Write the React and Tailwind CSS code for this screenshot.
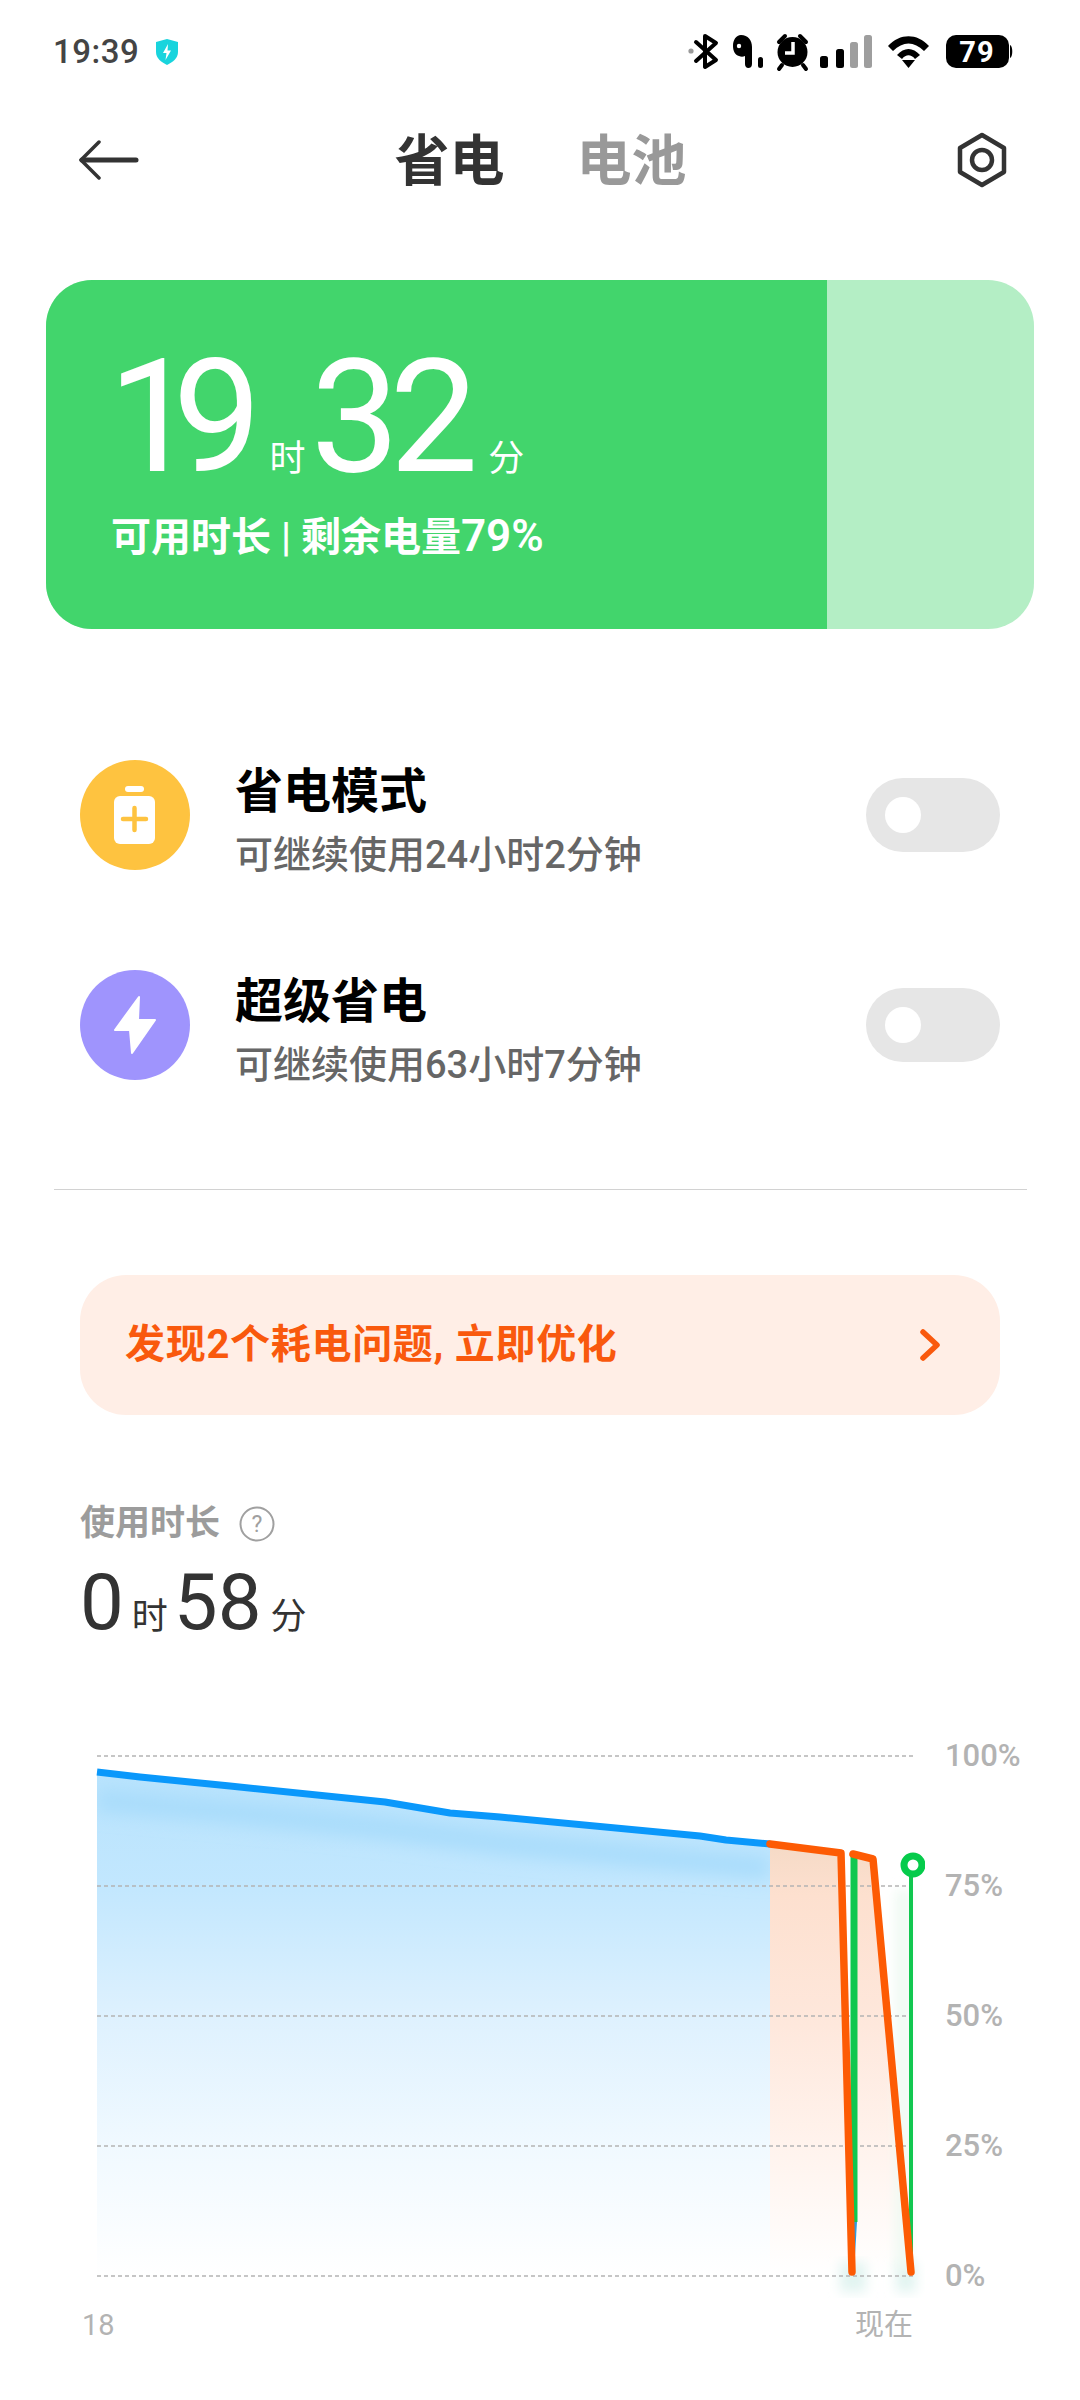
import React from 'react';

const cn = { fontFamily: 'Roboto, "Noto Sans CJK SC", sans-serif' };

/* ================= Status bar icons ================= */
const StatusIcons = () => (
  <svg width="335" height="40" viewBox="685 32 335 40" className="block">
    {/* bluetooth */}
    <circle cx="691" cy="51" r="2.6" fill="#9a9a9a" />
    <path d="M696 42 L716 60 L705 67 V36 L716 43 L696 61" fill="none" stroke="#000" strokeWidth="4" strokeLinejoin="round" strokeLinecap="round" />
    {/* earbud */}
    <path d="M741 35 C748 35 752 40 752 47 V64 C752 67 750 68 748.500 68 C746 68 745 66 745 64 V56 C743 57 741 57 739 56 C735 55 733 51 733 46 C733 40 736 35 741 35 Z" fill="#000" />
    <circle cx="739" cy="46" r="2.200" fill="#fff" />
    <rect x="758" y="57" width="5" height="11" rx="2.500" fill="#000" />
    {/* alarm */}
    <circle cx="792.500" cy="52" r="15" fill="#000" />
    <path d="M779 42 L785 36 M806 42 L800 36 M782 65 L779 69 M803 65 L806 69" stroke="#000" strokeWidth="4" strokeLinecap="round" />
    <path d="M793 42 V53 H785" fill="none" stroke="#fff" strokeWidth="3.500" />
    {/* signal */}
    <rect x="820" y="56" width="8" height="12" rx="2.500" fill="#000" />
    <rect x="836" y="49" width="8" height="19" rx="2.500" fill="#000" />
    <rect x="850" y="42" width="8" height="26" rx="2.500" fill="#9e9e9e" />
    <rect x="864" y="35" width="8" height="33" rx="2.500" fill="#9e9e9e" />
    {/* wifi */}
    <path d="M888 46 C900 33 917 33 929 46 L924 51 C914 41 903 41 893 51 Z" fill="#000" />
    <path d="M897 55 C904 47 913 47 920 55 L915 59 C911 54 906 54 902 59 Z" fill="#000" />
    <path d="M902 60 H915 L908.500 68 Z" fill="#000" />
    {/* battery */}
    <rect x="946" y="35" width="63" height="33" rx="10" fill="#000" />
    <path d="M1010 45 C1013 46 1013 57 1010 58 Z" fill="#000" />
    <text x="977" y="62" textAnchor="middle" fontSize="29" fontWeight="700" fill="#fff" fontFamily="Roboto, sans-serif" letterSpacing="1">79</text>
  </svg>
);

const BackArrow = () => (
  <svg width="60" height="40" viewBox="0 0 60 40" fill="none" stroke="#333" strokeLinecap="round" strokeLinejoin="round">
    <path d="M20 2 L2 20 L20 38" strokeWidth="3.500" />
    <path d="M3 20 H57" strokeWidth="5" />
  </svg>
);

const SettingsHex = () => (
  <svg width="52" height="56" viewBox="0 0 52 56" fill="none" stroke="#333" strokeWidth="4.500" strokeLinejoin="round">
    <path d="M26 3 L48 16 V40 L26 53 L4 40 V16 Z" />
    <circle cx="26" cy="28" r="10" />
  </svg>
);

const BatteryPlus = () => (
  <svg width="44" height="58" viewBox="0 0 44 58">
    <rect x="12" y="0" width="19" height="6" rx="3" fill="#fff" />
    <rect x="1" y="10" width="41" height="48" rx="6" fill="#fff" />
    <path d="M21.500 22 V44 M10 33 H33" stroke="#fec340" strokeWidth="4.500" strokeLinecap="round" />
  </svg>
);

const Bolt = () => (
  <svg width="46" height="60" viewBox="0 0 46 60">
    <path d="M27 2 L3 35 H18 L20 58 L43 25 H26 Z" fill="#fff" stroke="#fff" strokeWidth="2" strokeLinejoin="round" />
  </svg>
);

/* ================= Chart ================= */
const Chart = () => (
  <svg width="845" height="560" viewBox="80 1740 845 560" className="block shrink-0">
    <defs>
      <linearGradient id="blueFill" gradientUnits="userSpaceOnUse" x1="0" y1="1772" x2="0" y2="2276">
        <stop offset="0" stopColor="#b8e3fd" />
        <stop offset="0.226" stopColor="#c2e7fe" />
        <stop offset="0.484" stopColor="#def1fe" />
        <stop offset="0.74" stopColor="#f0f9ff" />
        <stop offset="1" stopColor="#ffffff" />
      </linearGradient>
      <linearGradient id="orangeFill" gradientUnits="userSpaceOnUse" x1="0" y1="1844" x2="0" y2="2276">
        <stop offset="0" stopColor="#f5dac6" />
        <stop offset="0.12" stopColor="#fde0cf" />
        <stop offset="0.4" stopColor="#fee7db" />
        <stop offset="0.7" stopColor="#fff3ed" />
        <stop offset="1" stopColor="#ffffff" />
      </linearGradient>
      <clipPath id="blueClip">
        <path d="M97 1772 L140 1777 L230 1786 L385 1802 L450 1813 L500 1817 L700 1836 L726 1840 L770 1844 V2276 H97 Z" />
      </clipPath>
      <filter id="soft" x="-50%" y="-50%" width="200%" height="200%">
        <feGaussianBlur stdDeviation="9" />
      </filter>
      <filter id="softer" x="-100%" y="-20%" width="300%" height="140%">
        <feGaussianBlur stdDeviation="6" />
      </filter>
    </defs>

    {/* areas */}
    <path d="M97 1772 L140 1777 L230 1786 L385 1802 L450 1813 L500 1817 L700 1836 L726 1840 L770 1844 V2276 H97 Z" fill="url(#blueFill)" />
    <g clipPath="url(#blueClip)">
      <path d="M97 1800 L230 1812 L385 1828 L500 1843 L770 1868" fill="none" stroke="#a8dcfb" strokeWidth="22" filter="url(#soft)" />
    </g>
    <path d="M770 1844 L840 1854 L850 2272 L850 2276 H770 Z" fill="url(#orangeFill)" />
    <path d="M853 1854 L872 1860 L911 2272 V2276 H853 Z" fill="url(#orangeFill)" />

    {/* glows */}
    <rect x="840" y="2262" width="26" height="30" fill="#e2f4f1" filter="url(#softer)" />
    <rect x="896" y="2262" width="20" height="30" fill="#e2f4f1" filter="url(#softer)" />
    <rect x="896" y="1890" width="14" height="380" fill="#eef9f2" filter="url(#softer)" />

    {/* grid */}
    {[1756, 1886, 2016, 2146, 2276].map((y) => (
      <line key={y} x1="97" x2="913" y1={y} y2={y} stroke="#b4b4b4" strokeWidth="1.500" strokeDasharray="4 3" />
    ))}

    {/* lines */}
    <polyline points="97,1772 140,1777 230,1786 385,1802 450,1813 500,1817 700,1836 726,1840 770,1844" fill="none" stroke="#0a98fb" strokeWidth="7" strokeLinejoin="round" />
    <path d="M854 1856 V2222" stroke="#10c74f" strokeWidth="7" fill="none" />
    <path d="M851 2222 H857 L854 2272 Z" fill="#2f9be0" />
    <path d="M911 1872 V2272" stroke="#10c74f" strokeWidth="4" fill="none" />
    <circle cx="913" cy="1865" r="9" fill="#fff" stroke="#06cb4b" strokeWidth="7" />
    <path d="M770 1844 L841 1853 L852 2272" fill="none" stroke="#fd5b04" strokeWidth="7.500" strokeLinejoin="round" strokeLinecap="round" />
    <path d="M853 1854 L873 1859 L911 2272" fill="none" stroke="#fd5b04" strokeWidth="7.500" strokeLinejoin="round" strokeLinecap="round" />
  </svg>
);

const PowerRow = ({ icon, color, title, sub }) => (
  <div className="flex items-center h-[110px]">
    <div className={`w-[110px] h-[110px] rounded-full flex items-center justify-center shrink-0 ${color}`}>
      {icon}
    </div>
    <div className="ml-[45px] flex-1 pt-[10px]">
      <p className="text-[48px] leading-[56px] font-bold text-black">{title}</p>
      <p className="text-[38px] leading-[44px] font-medium text-[#666666] mt-[13px]">{sub}</p>
    </div>
    <div className="w-[134px] h-[74px] rounded-full bg-[#e6e6e6] flex items-center pl-[19px]">
      <div className="w-[36px] h-[36px] rounded-full bg-white" />
    </div>
  </div>
);

const App = () => {
  return (
    <div className="w-[1080px] h-[2400px] bg-white overflow-hidden" style={cn}>
      {/* Status bar */}
      <div className="h-[104px] flex items-center justify-between pl-[53px] pr-[60px]">
        <div className="flex items-center gap-[17px]">
          <span className="text-[33px] font-medium text-[#444444] tracking-[0.5px]">19:39</span>
          <svg width="22" height="26" viewBox="0 0 22 26">
            <path d="M11 0 L22 3 V13 C22 19 17 23 11 26 C5 23 0 19 0 13 V3 Z" fill="#18d4dd" />
            <path d="M12 5 L7 14 H10.500 L9.500 21 L15 11.500 H11.500 Z" fill="#fff" />
          </svg>
        </div>
        <StatusIcons />
      </div>

      {/* Header */}
      <div className="h-[112px] flex items-center justify-between pl-[79px] pr-[72px]">
        <BackArrow />
        <div className="flex items-center gap-[72px] text-[55px] leading-[64px] font-bold pt-[2px] mr-[14px]">
          <span className="text-[#333333]">省电</span>
          <span className="text-[#999999]">电池</span>
        </div>
        <SettingsHex />
      </div>

      {/* Battery card */}
      <div className="mt-[64px] ml-[46px] w-[988px] h-[349px] rounded-[46px] overflow-hidden flex bg-[#b4eec5]">
        <div className="w-[781px] bg-[#42d56c] pl-[62px] pt-[58px] text-white">
          <div className="flex items-baseline h-[158px]">
            <span className="text-[158px] leading-[158px] font-normal tracking-[-24px]">19</span>
            <span className="text-[36px] ml-[32px]">时</span>
            <span className="text-[158px] leading-[158px] font-normal tracking-[-10px] ml-[5px]">32</span>
            <span className="text-[36px] ml-[20px]">分</span>
          </div>
          <p className="text-[40px] leading-[48px] font-semibold mt-[16px] ml-[3px]">
            可用时长 | 剩余电量<span className="text-[44px]">79%</span>
          </p>
        </div>
      </div>

      {/* Power modes */}
      <div className="mt-[131px] mx-[80px] flex flex-col gap-[100px]">
        <PowerRow
          icon={<BatteryPlus />}
          color="bg-[#fec340]"
          title="省电模式"
          sub="可继续使用24小时2分钟"
        />
        <PowerRow
          icon={<Bolt />}
          color="bg-[#9f94fd]"
          title="超级省电"
          sub="可继续使用63小时7分钟"
        />
      </div>

      <div className="mt-[109px] ml-[54px] w-[973px] h-[1px] bg-[#d2d2d2]" />

      {/* Optimize banner */}
      <div className="mt-[85px] mx-[80px] h-[140px] rounded-[46px] bg-[#ffeee6] flex items-center justify-between pl-[45px] pr-[60px]">
        <span className="text-[40px] tracking-[0.7px] font-bold text-[#f9590d]">发现2个耗电问题, 立即优化</span>
        <svg width="20" height="32" viewBox="0 0 20 32" fill="none" stroke="#f9590d" strokeWidth="5.500" strokeLinecap="round" strokeLinejoin="round">
          <path d="M3 3 L17 16 L3 29" />
        </svg>
      </div>

      {/* Usage */}
      <div className="mt-[88px] ml-[80px]">
        <div className="flex items-center h-[42px]">
          <span className="text-[35px] font-semibold text-[#9c9c9c]">使用时长</span>
          <svg width="36" height="36" viewBox="0 0 36 36" className="ml-[19px]">
            <circle cx="18" cy="18" r="16.500" fill="none" stroke="#a0a0a0" strokeWidth="2" />
            <text x="18" y="26" textAnchor="middle" fontSize="23" fill="#a0a0a0" fontFamily="Roboto, sans-serif">?</text>
          </svg>
        </div>
        <div className="flex items-baseline text-[#333333] mt-[19px] h-[75px]">
          <span className="text-[78px] leading-[78px]">0</span>
          <span className="text-[36px] ml-[8px]">时</span>
          <span className="text-[78px] leading-[78px] ml-[6px]">58</span>
          <span className="text-[36px] ml-[9px]">分</span>
        </div>
      </div>

      {/* Chart */}
      <div className="mt-[101px] ml-[80px] flex">
        <Chart />
        <div className="ml-[20px] flex flex-col gap-[98px] text-[31px] leading-[32px] font-medium text-[#b3b3b3]">
          <span>100%</span>
          <span>75%</span>
          <span>50%</span>
          <span>25%</span>
          <span>0%</span>
        </div>
      </div>
      <div className="mt-[8px] ml-[82px] w-[831px] flex justify-between text-[29px] leading-[34px] text-[#b3b3b3]">
        <span>18</span>
        <span>现在</span>
      </div>
    </div>
  );
};

export default App;
